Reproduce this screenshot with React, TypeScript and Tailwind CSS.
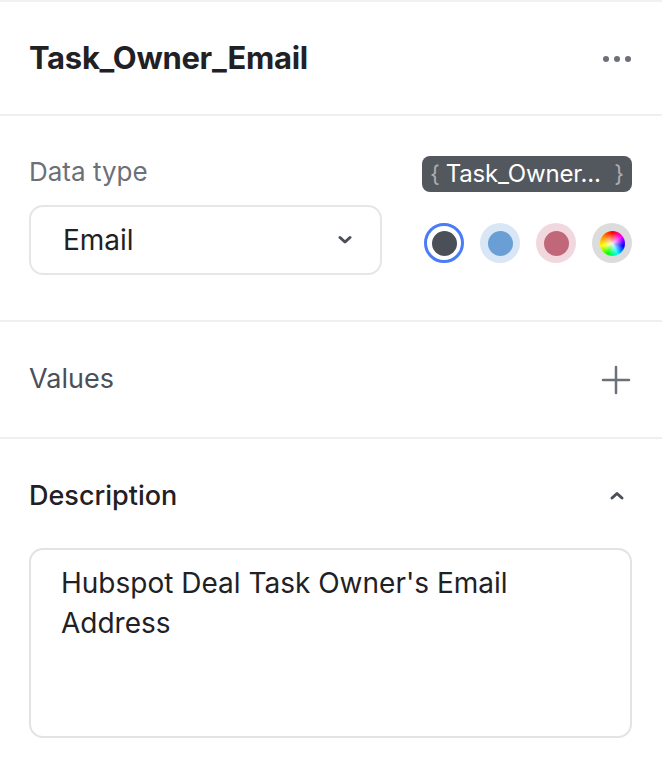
import React from "react";

export default function App() {
  return (
    <div
      className="w-[662px] h-[770px] bg-white overflow-hidden text-[#1f2125]"
      style={{ fontFamily: "Inter, 'Noto Sans', sans-serif" }}
    >
      <div className="h-[2px] bg-[#f1f1f2]" />
      {/* Header */}
      <div className="h-[112px] flex items-center justify-between pl-[29px] pr-[30px]">
        <div className="text-[31px] font-bold tracking-[-0.3px] text-[#1f2125]">Task_Owner_Email</div>
        <svg width="30" height="8" viewBox="0 0 30 8" className="mt-[2px]">
          <circle cx="4" cy="4" r="3" fill="#6b7079" />
          <circle cx="15" cy="4" r="3" fill="#6b7079" />
          <circle cx="26" cy="4" r="3" fill="#6b7079" />
        </svg>
      </div>
      <div className="h-[2px] bg-[#efeff0]" />
      {/* Data type section */}
      <div className="h-[204px] flex justify-between pl-[29px] pr-[30px] pt-[40px]">
        <div className="flex flex-col">
          <div className="text-[26px] leading-[32px] text-[#6b7079]">Data type</div>
          <div className="mt-[17px] w-[353px] h-[70px] rounded-[14px] border-2 border-[#e6e6e8] flex items-center justify-between pl-[32px] pr-[28px]">
            <span className="text-[28px] text-[#1f2125]">Email</span>
            <svg width="14" height="10" viewBox="0 0 14 10">
              <path d="M2 2.5 L7 7 L12 2.5" stroke="#4b5058" strokeWidth="3" fill="none" strokeLinecap="round" strokeLinejoin="round" />
            </svg>
          </div>
        </div>
        <div className="flex flex-col items-end">
          <div className="h-[36px] w-[210px] rounded-[8px] bg-[#53575e] flex items-center justify-between px-[8px]">
            <span className="text-[23px] text-[#a9acb1]">{"{"}</span>
            <span className="text-[24px] text-white flex-1 ml-[6px] tracking-[-0.2px]">Task_Owner...</span>
            <span className="text-[23px] text-[#a9acb1]">{"}"}</span>
          </div>
          <div className="mt-[31px] flex gap-[16px]">
            <div className="w-[40px] h-[40px] rounded-full border-[3px] border-[#4a7cf7] bg-white flex items-center justify-center">
              <div className="w-[25px] h-[25px] rounded-full bg-[#4b5058]" />
            </div>
            <div className="w-[40px] h-[40px] rounded-full bg-[#d9e6f5] flex items-center justify-center">
              <div className="w-[25px] h-[25px] rounded-full bg-[#6a9fd5]" />
            </div>
            <div className="w-[40px] h-[40px] rounded-full bg-[#f1d8de] flex items-center justify-center">
              <div className="w-[25px] h-[25px] rounded-full bg-[#c0677a]" />
            </div>
            <div className="w-[40px] h-[40px] rounded-full bg-[#dcdcdd] flex items-center justify-center">
              <div
                className="w-[25px] h-[25px] rounded-full"
                style={{
                  background:
                    "radial-gradient(circle, rgba(255,255,255,0.9) 0%, rgba(255,255,255,0) 60%), conic-gradient(from 0deg, #ff0000, #ff00ff, #0000ff, #00ffff, #00ff00, #ffff00, #ff8800, #ff0000)",
                }}
              />
            </div>
          </div>
        </div>
      </div>
      <div className="h-[2px] bg-[#efeff0]" />
      {/* Values */}
      <div className="h-[115px] flex items-center justify-between pl-[29px] pr-[31px]">
        <div className="text-[27px] text-[#4b5058]">Values</div>
        <svg width="30" height="30" viewBox="0 0 30 30">
          <path d="M15 2 V28 M2 15 H28" stroke="#6b7079" strokeWidth="2.5" strokeLinecap="round" />
        </svg>
      </div>
      <div className="h-[2px] bg-[#efeff0]" />
      {/* Description */}
      <div className="pl-[29px] pr-[30px]">
        <div className="h-[109px] pt-[5px] flex items-center justify-between">
          <div className="text-[27px] font-medium text-[#1f2125]">Description</div>
          <svg width="16" height="12" viewBox="0 0 16 12" className="mr-[7px]">
            <path d="M3 8 L8 3.5 L13 8" stroke="#4b5058" strokeWidth="3" fill="none" strokeLinecap="round" strokeLinejoin="round" />
          </svg>
        </div>
        <div className="h-[190px] rounded-[14px] border-2 border-[#e3e3e5] pl-[30px] pr-[20px] pt-[13px] text-[28px] leading-[40px] text-[#1f2125]">
          Hubspot Deal Task Owner's Email Address
        </div>
      </div>
    </div>
  );
}
